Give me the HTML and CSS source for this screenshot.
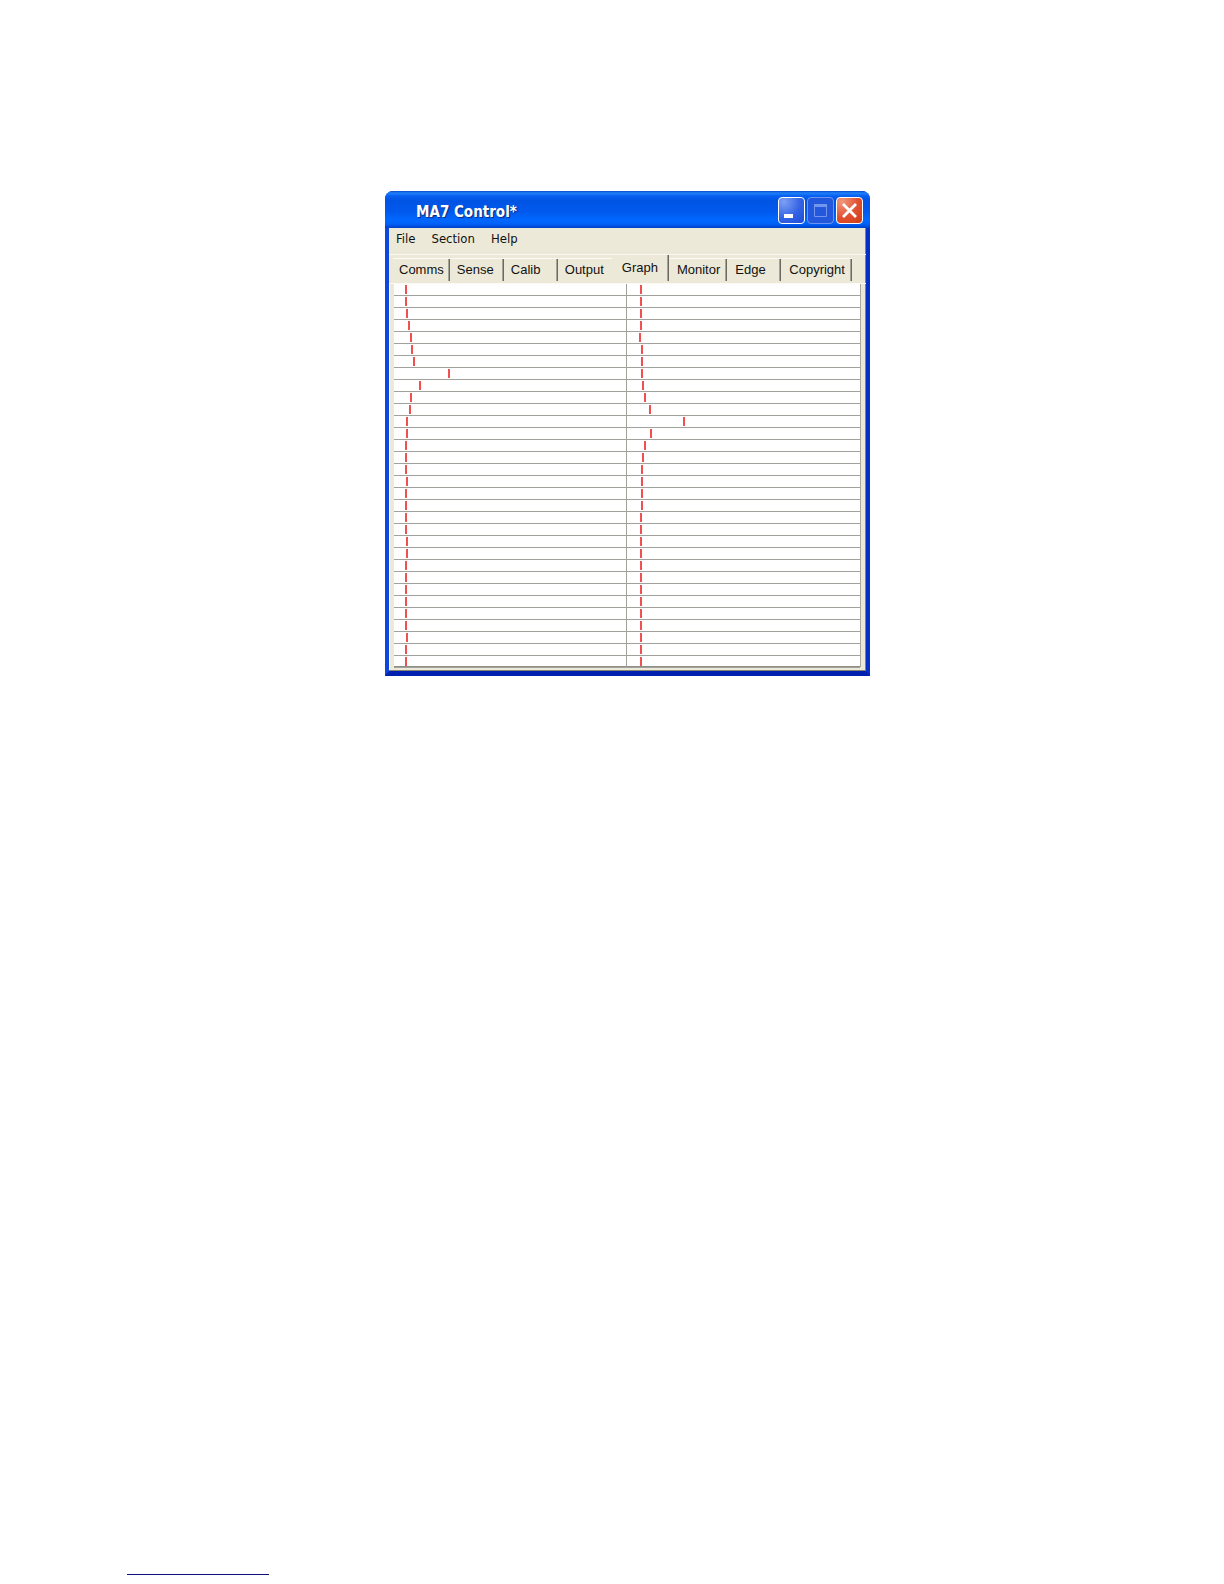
FILE: index.html
```html
<!DOCTYPE html>
<html lang="en">
<head>
<meta charset="utf-8">
<meta name="viewport" content="width=device-width, initial-scale=1">
<title>MA7 Control*</title>
<link rel="stylesheet" href="styles.css">
</head>
<body>
<main class="page">
  <section class="window" aria-labelledby="window-title">
    <header class="titlebar">
      <h1 class="title" id="window-title">MA7 Control*</h1>
      <div class="window-buttons">
        <button class="win-btn" type="button" aria-label="Minimize">
          <svg viewBox="0 0 23 23" aria-hidden="true"><rect x="4" y="15" width="9" height="4" fill="#fff"/></svg>
        </button>
        <button class="win-btn win-btn-off" type="button" aria-label="Maximize" disabled>
          <svg viewBox="0 0 23 23" aria-hidden="true"><path d="M5.5 5.5h12v12h-12z" fill="none" stroke="#7295ee"/><path d="M5 5h13v3H5z" fill="#7295ee"/></svg>
        </button>
        <button class="win-btn win-btn-close" type="button" aria-label="Close">
          <svg viewBox="0 0 23 23" aria-hidden="true"><path d="M5 5l13 13M18 5l-13 13" stroke="#fff" stroke-width="2.8"/></svg>
        </button>
      </div>
    </header>
    <div class="client">
      <nav class="menu" aria-label="Menu">
        <button class="menu-item" type="button">File</button>
        <button class="menu-item" type="button">Section</button>
        <button class="menu-item" type="button">Help</button>
      </nav>
      <div class="tabs" role="tablist">
        <button class="tab" type="button" role="tab">Comms</button>
        <button class="tab" type="button" role="tab">Sense</button>
        <button class="tab" type="button" role="tab">Calib</button>
        <button class="tab tab-before" type="button" role="tab">Output</button>
        <button class="tab tab-on" type="button" role="tab" aria-selected="true">Graph</button>
        <button class="tab tab-after" type="button" role="tab">Monitor</button>
        <button class="tab tab-after" type="button" role="tab">Edge</button>
        <button class="tab tab-after" type="button" role="tab">Copyright</button>
      </div>
      <div class="panel">
        <div class="graph" id="graph"></div>
      </div>
    </div>
  </section>
  <footer class="footer"><a class="footer-link" href="#" aria-label="Link"></a></footer>
</main>
<script src="graph.js"></script>
</body>
</html>
```

FILE: styles.css
```css
* { box-sizing: border-box; }

body {
  margin: 0;
  background: #fff;
  color: #111;
  font-family: "Liberation Sans", Arial, sans-serif;
  font-size: 13px;
}

button {
  margin: 0;
  padding: 0;
  border: 0;
  background: none;
  color: inherit;
  font: inherit;
}

.page {
  display: flex;
  flex-direction: column;
  min-height: 100vh;
  padding: 191px 96px 9px 127px;
}

.window {
  width: 100%;
  max-width: 485px;
  margin: 0 auto;
  border-radius: 8px 8px 0 0;
  background: #0c48dc;
  overflow: hidden;
}

.titlebar {
  display: flex;
  align-items: center;
  justify-content: space-between;
  height: 37px;
  padding: 2px 7px 0 31px;
  background: linear-gradient(#0848c8 0, #2080f8 2px, #0860f0 5px, #0054e4 9px, #0058ec 20px, #0068ff 29px, #0060f8 33px, #0040c8 37px);
}

.title {
  margin: 0;
  padding-top: 2px;
  color: #fff;
  font: bold 15px/20px "DejaVu Sans Condensed", "DejaVu Sans", sans-serif;
  text-shadow: 1px 1px 1px #0a2a80;
}

.window-buttons { display: flex; gap: 2px; }

.win-btn {
  width: 27px;
  height: 27px;
  padding: 1px;
  border: 1px solid #fff;
  border-radius: 4px;
  background: radial-gradient(circle at 20% 15%, #7da0f4, #3464e4 55%, #1c4cd8);
}

.win-btn svg { display: block; width: 23px; height: 23px; }

.win-btn-off {
  border-color: #6c94f0;
  background: #2458dc;
}

.win-btn-close { background: radial-gradient(circle at 20% 15%, #f0987c, #e05030 55%, #cc3c14); }

.client {
  padding-bottom: 1px;
  border: solid;
  border-width: 0 4px 5px;
  border-color: transparent #0430c8 #0020b0 #0c48dc;
  background: #ece9d8;
  background-clip: padding-box;
  box-shadow: inset -1px -1px #848270;
}

.menu {
  display: flex;
  gap: 16px;
  height: 26px;
  padding: 0 0 4px 7px;
  font: 13px/22px "DejaVu Sans Condensed", "DejaVu Sans", sans-serif;
}

.tabs {
  display: flex;
  align-items: flex-end;
  height: 29px;
  padding-left: 4px;
  border-top: 1px solid #f8f7f0;
}

.tab {
  position: relative;
  min-width: 54px;
  height: 25px;
  padding: 0 7px 3px;
  border-top: 1px solid #fbfaf4;
  text-align: left;
}

.tab::after {
  content: "";
  position: absolute;
  top: 0;
  right: 0;
  bottom: 2px;
  width: 2px;
  background: linear-gradient(90deg, #a5a297 1px, #6c6a60 1px);
}

.tab:first-child { padding: 0 6px 3px; }

.tab-before::after { display: none; }

.tab-on {
  height: 28px;
  padding: 0 11px 4px 10px;
  border-top: 0;
}

.tab-after { padding: 0 7px 3px 8px; }

.panel {
  padding: 0 5px 3px 4px;
  border-top: 1px solid #faf9f2;
  border-left: 1px solid #faf9f2;
}

.graph {
  display: grid;
  grid-template-columns: 1fr 1fr;
  grid-template-rows: repeat(32, 1fr);
  grid-auto-flow: column;
  height: 383px;
  border-right: 1px solid #aaa89c;
  border-bottom: 1px solid #908e84;
  background: #fff;
}

.cell {
  padding: 1px 0;
  border-bottom: 1px solid #a2a29c;
}

.cell-left { border-right: 1px solid #a2a29c; }

.mark {
  width: 2px;
  height: 9px;
  background: #f05050;
}

.footer { margin-top: auto; }

.footer-link {
  display: block;
  width: 142px;
  height: 14px;
  border-bottom: 1px solid #10107c;
}
```

FILE: graph.js
```js
// Sensor readings for each bank, in pixels from the left edge of the bank.
const banks = [
  [11, 11, 12, 14, 16, 17, 19, 54, 25, 16, 15, 12, 12, 11, 11, 11,
   12, 11, 11, 11, 11, 12, 12, 11, 11, 11, 11, 11, 11, 12, 11, 11],
  [13, 13, 13, 13, 12, 14, 14, 14, 15, 17, 22, 56, 23, 17, 15, 14,
   14, 14, 14, 13, 13, 13, 13, 13, 13, 13, 13, 13, 13, 13, 13, 13]
];

const graph = document.getElementById("graph");
banks.forEach((values, bank) => {
  for (const value of values) {
    const cell = document.createElement("div");
    cell.className = bank === 0 ? "cell cell-left" : "cell";
    const mark = document.createElement("div");
    mark.className = "mark";
    mark.style.marginLeft = value + "px";
    cell.append(mark);
    graph.append(cell);
  }
});
```
